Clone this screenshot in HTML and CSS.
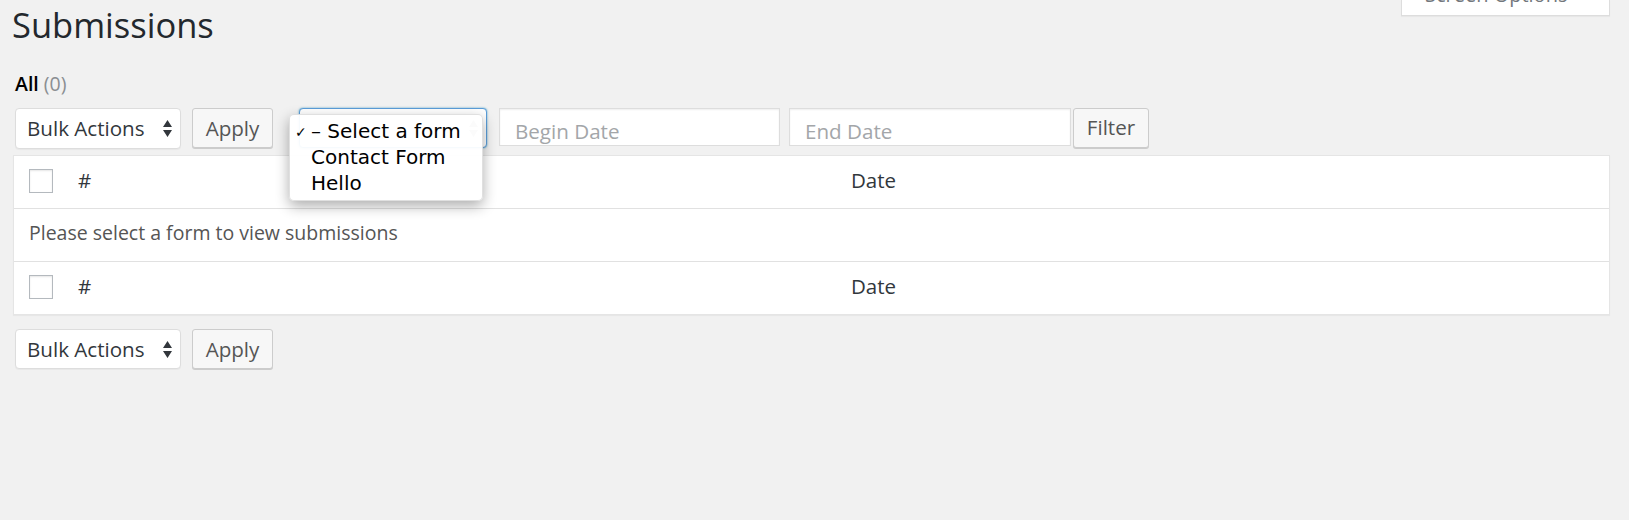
FILE: index.html
```html
<!DOCTYPE html>
<html lang="en">
<head>
<meta charset="utf-8">
<title>Submissions</title>
<link rel="stylesheet" href="styles.css">
</head>
<body>
<div class="wrap">
  <div class="header">
    <h1 class="title">Submissions</h1>
    <div class="screen-tab"><span class="screen-tab-text">Screen Options</span></div>
  </div>

  <div class="subsubsub"><span class="current">All</span> <span class="count">(0)</span></div>

  <div class="toolbar">
    <div class="select bulk">
      <span>Bulk Actions</span>
      <svg class="arrows" width="9" height="17" viewBox="0 0 9 17"><path d="M4.5 0L9 7H0z M0 10h9L4.5 17z" fill="#32373c"/></svg>
    </div>
    <div class="button apply">Apply</div>

    <div class="form-select-wrap">
      <div class="select form-select">
        <span></span>
        <svg class="arrows" width="9" height="17" viewBox="0 0 9 17"><path d="M4.5 0L9 7H0z M0 10h9L4.5 17z" fill="#555"/></svg>
      </div>
      <div class="popup">
        <div class="option"><span class="check">✓</span>– Select a form</div>
        <div class="option">Contact Form</div>
        <div class="option">Hello</div>
      </div>
    </div>

    <div class="input begin">Begin Date</div>
    <div class="input end">End Date</div>
    <div class="button filter">Filter</div>
  </div>

  <div class="table">
    <div class="row head">
      <div class="cell check-col"><span class="checkbox"></span></div>
      <div class="cell">#</div>
      <div class="cell">Date</div>
    </div>
    <div class="row body">
      <div class="cell message">Please select a form to view submissions</div>
    </div>
    <div class="row head last">
      <div class="cell check-col"><span class="checkbox"></span></div>
      <div class="cell">#</div>
      <div class="cell">Date</div>
    </div>
  </div>

  <div class="toolbar bottom">
    <div class="select bulk short">
      <span>Bulk Actions</span>
      <svg class="arrows" width="9" height="17" viewBox="0 0 9 17"><path d="M4.5 0L9 7H0z M0 10h9L4.5 17z" fill="#32373c"/></svg>
    </div>
    <div class="button apply">Apply</div>
  </div>
</div>
</body>
</html>
```

FILE: styles.css
```css
html, body {
  margin: 0;
  padding: 0;
  background: #f1f1f1;
}

body {
  font-family: "Open Sans", "Liberation Sans", sans-serif;
  font-size: 19.5px;
  line-height: 28px;
  color: #444;
}

.wrap {
  margin: 0 19px 0 13px;
}

.header {
  display: flex;
  justify-content: space-between;
  align-items: flex-start;
}

.title {
  margin: 0 0 0 -1px;
  padding-top: 2px;
  font-size: 34.5px;
  line-height: 46px;
  font-weight: 400;
  color: #23282d;
}

.screen-tab {
  width: 209px;
  height: 16px;
  box-sizing: border-box;
  background: #fff;
  border: 1px solid #ddd;
  border-top: none;
  box-shadow: 0 1px 1px rgba(0, 0, 0, 0.04);
  overflow: hidden;
  padding-left: 23px;
}

.screen-tab-text {
  display: block;
  margin-top: -19px;
  font-size: 20px;
  color: #72777c;
  white-space: nowrap;
}

.subsubsub {
  margin-top: 22px;
  padding-left: 2px;
  height: 28px;
}

.subsubsub .current {
  color: #000;
  font-weight: 600;
}

.subsubsub .count {
  color: #8a8e92;
}

.toolbar {
  margin-top: 10px;
  display: flex;
  align-items: flex-start;
  height: 41px;
  font-size: 20.6px;
}

.select {
  box-sizing: border-box;
  height: 41px;
  background: #fff;
  border: 1px solid #ddd;
  border-radius: 4px;
  box-shadow: 0 1px 1px rgba(0, 0, 0, 0.04);
  display: flex;
  justify-content: space-between;
  align-items: flex-start;
  padding: 5px 8px 0 11px;
  color: #32373c;
}

.select .arrows {
  margin-top: 6px;
}

.bulk {
  width: 166px;
  margin-left: 2px;
}

.bulk.short {
  height: 40px;
}

.button {
  box-sizing: border-box;
  height: 40px;
  background: #f7f7f7;
  border: 1px solid #ccc;
  border-radius: 3px;
  box-shadow: 0 1px 0 #ccc;
  color: #555;
  text-align: center;
  padding-top: 5px;
}

.apply {
  width: 81px;
  margin-left: 11px;
}

.filter {
  width: 76px;
  margin-left: 2px;
  padding-top: 4px;
}

.form-select-wrap {
  position: relative;
  margin-left: 26px;
}

.form-select {
  width: 188px;
  height: 40px;
  border-color: #5b9dd9;
  box-shadow: 0 0 2px rgba(30, 140, 190, 0.8);
  padding-right: 8px;
}

.form-select .arrows {
  opacity: 0.5;
}

.popup {
  position: absolute;
  left: -10px;
  top: 6px;
  width: 194px;
  height: 87px;
  box-sizing: border-box;
  background: rgba(255, 255, 255, 0.95);
  border: 1px solid rgba(0, 0, 0, 0.12);
  border-radius: 5px;
  box-shadow: 0 5px 14px rgba(0, 0, 0, 0.32);
  padding-top: 3px;
  font-family: "DejaVu Sans", "Noto Sans", sans-serif;
  font-size: 20px;
  line-height: 26px;
  color: #000;
}

.option {
  position: relative;
  padding-left: 21px;
  white-space: nowrap;
}

.check {
  position: absolute;
  left: 5px;
  top: 1px;
  font-size: 14px;
}

.input {
  box-sizing: border-box;
  height: 38px;
  background: #fff;
  border: 1px solid #ddd;
  box-shadow: inset 0 1px 2px rgba(0, 0, 0, 0.07);
  padding: 8px 0 0 15px;
  color: #a3a6a9;
}

.begin {
  width: 281px;
  margin-left: 12px;
}

.end {
  width: 282px;
  margin-left: 9px;
}

.table {
  margin-top: 6px;
  background: #fff;
  border: 1px solid #e5e5e5;
  box-shadow: 0 1px 1px rgba(0, 0, 0, 0.04);
}

.row {
  display: grid;
  grid-template-columns: 49px 1fr 1fr;
  height: 53px;
  box-sizing: border-box;
  border-bottom: 1px solid #e1e1e1;
}

.row.last {
  border-bottom: none;
  height: 52px;
}

.cell {
  padding: 10px 15px 0;
  color: #32373c;
}

.row.head .cell {
  font-size: 20.5px;
}

.check-col {
  padding: 13px 0 0 15px;
}

.checkbox {
  display: block;
  width: 24px;
  height: 24px;
  box-sizing: border-box;
  border: 1px solid #b4b9be;
  background: #fff;
  box-shadow: inset 0 1px 2px rgba(0, 0, 0, 0.1);
}

.row.body {
  display: block;
}

.message {
  color: #555;
}

.toolbar.bottom {
  margin-top: 14px;
}
```
